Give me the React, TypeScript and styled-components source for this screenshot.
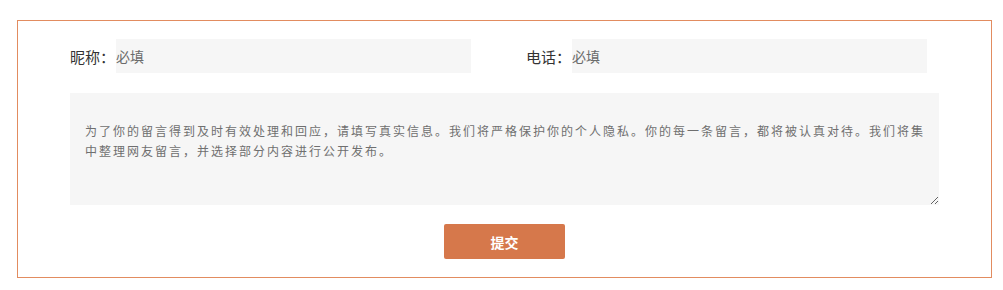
import React from "react";
import styled, { createGlobalStyle } from "styled-components";

const Global = createGlobalStyle`
  html, body { margin: 0; padding: 0; background: #fff; }
  body { font-family: "Noto Sans CJK SC", "Microsoft YaHei", sans-serif; }
  * { box-sizing: border-box; }
`;

const Page = styled.div`
  padding: 20px 0 0 17px;
`;

const Form = styled.form`
  width: 975px;
  height: 258px;
  border: 1px solid #e28c60;
  padding: 18px 52px 0 52px;
  display: flex;
  flex-direction: column;
  align-items: stretch;
`;

const FieldRow = styled.div`
  display: flex;
  gap: 55px;
  height: 34px;
`;

const Field = styled.label`
  display: flex;
  align-items: center;
`;

const Label = styled.span`
  width: 46px;
  font-size: 15px;
  color: #333;
  white-space: nowrap;
`;

const Input = styled.input`
  width: 355px;
  height: 34px;
  border: none;
  outline: none;
  background: #f6f6f6;
  padding: 0;
  font-family: "Noto Sans CJK SC", sans-serif;
  font-size: 14px;
  color: #333;
  &::placeholder { color: #6b6b6b; }
`;

const Message = styled.textarea`
  margin-top: 20px;
  width: 869px;
  height: 112px;
  border: none;
  outline: none;
  background: #f6f6f6;
  padding: 28px 10px 10px 15px;
  font-family: "Noto Sans CJK SC", sans-serif;
  font-size: 12px;
  line-height: 20px;
  letter-spacing: 2px;
  color: #6f6f6f;
  resize: both;
`;

const Submit = styled.button`
  margin: 19px auto 0;
  width: 121px;
  height: 35px;
  border: none;
  border-radius: 2px;
  background: #d6784b;
  color: #fff;
  font-family: "Noto Sans CJK SC", sans-serif;
  font-size: 14px;
  font-weight: bold;
  cursor: pointer;
`;

export default function App() {
  return (
    <Page>
      <Global />
      <Form onSubmit={(e) => e.preventDefault()}>
        <FieldRow>
          <Field>
            <Label>昵称：</Label>
            <Input placeholder="必填" />
          </Field>
          <Field>
            <Label>电话：</Label>
            <Input placeholder="必填" />
          </Field>
        </FieldRow>
        <Message defaultValue="为了你的留言得到及时有效处理和回应，请填写真实信息。我们将严格保护你的个人隐私。你的每一条留言，都将被认真对待。我们将集中整理网友留言，并选择部分内容进行公开发布。" />
        <Submit type="submit">提交</Submit>
      </Form>
    </Page>
  );
}
